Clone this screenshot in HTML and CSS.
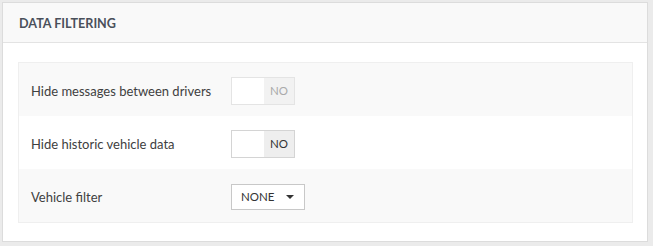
FILE: index.html
```html
<!DOCTYPE html>
<html lang="en">
  <head>
    <meta charset="UTF-8" />
    <title>Data Filtering</title>
    <link rel="stylesheet" href="styles.css">
  </head>
  <body>
    <div class="panel">
      <div class="panel-header">
        <h2>Data Filtering</h2>
      </div>
      <div class="panel-body">
        <div class="settings">
          <div class="setting-row shaded">
            <label>Hide messages between drivers</label>
            <div class="toggle disabled">
              <span class="toggle-off"></span>
              <span class="toggle-label">NO</span>
            </div>
          </div>
          <div class="setting-row">
            <label>Hide historic vehicle data</label>
            <div class="toggle">
              <span class="toggle-off"></span>
              <span class="toggle-label">NO</span>
            </div>
          </div>
          <div class="setting-row shaded">
            <label>Vehicle filter</label>
            <div class="dropdown">
              <span>NONE</span>
              <span class="caret"></span>
            </div>
          </div>
        </div>
      </div>
    </div>
  </body>
</html>
```

FILE: styles.css
```css
body {
  margin: 0;
  padding: 2px 5px 4px 2px;
  background-color: #ebebeb;
  font-family: Lato, "Open Sans", Arial, sans-serif;
  color: #404040;
}

/* Panel */
.panel {
  background-color: #fff;
  border: 1px solid #dcdcdc;
  box-sizing: border-box;
  height: 240px;
}

.panel-header {
  background-color: #f9f9f9;
  border-bottom: 1px solid #e3e3e3;
  height: 38px;
  display: flex;
  align-items: center;
  padding: 1px 16px 0;
}

.panel-header h2 {
  margin: 0;
  font-size: 12.6px;
  font-weight: 700;
  text-transform: uppercase;
  color: #4a505a;
}

.panel-body {
  padding: 19px 14px 18px 15px;
}

/* Settings list */
.settings {
  border: 1px solid #efefef;
}

.setting-row {
  display: grid;
  grid-template-columns: 200px auto;
  align-items: center;
  height: 53px;
  padding: 2px 12px 0;
  box-sizing: border-box;
  font-size: 13px;
}

.setting-row.shaded {
  background-color: #f9f9f9;
}

/* Toggle switch */
.toggle {
  display: flex;
  width: 62px;
  height: 26px;
  border: 1px solid #d4d4d4;
  justify-self: start;
}

.toggle-off {
  width: 32px;
  background-color: #fff;
}

.toggle-label {
  flex: 1;
  background-color: #eee;
  display: flex;
  align-items: center;
  justify-content: center;
  font-size: 11.5px;
  color: #333;
}

.toggle.disabled {
  border-color: #e4e4e4;
}

.toggle.disabled .toggle-label {
  background-color: #f2f2f2;
  color: #aaa;
}

/* Dropdown */
.dropdown {
  display: flex;
  align-items: center;
  justify-content: space-between;
  border: 1px solid #c8c8c8;
  background-color: #fff;
  padding: 0 10px 0 9px;
  box-sizing: border-box;
  width: 74px;
  height: 26px;
  font-size: 11.5px;
  color: #333;
  justify-self: start;
}

.caret {
  width: 0;
  height: 0;
  border-left: 4px solid transparent;
  border-right: 4px solid transparent;
  border-top: 4px solid #333;
}
```
